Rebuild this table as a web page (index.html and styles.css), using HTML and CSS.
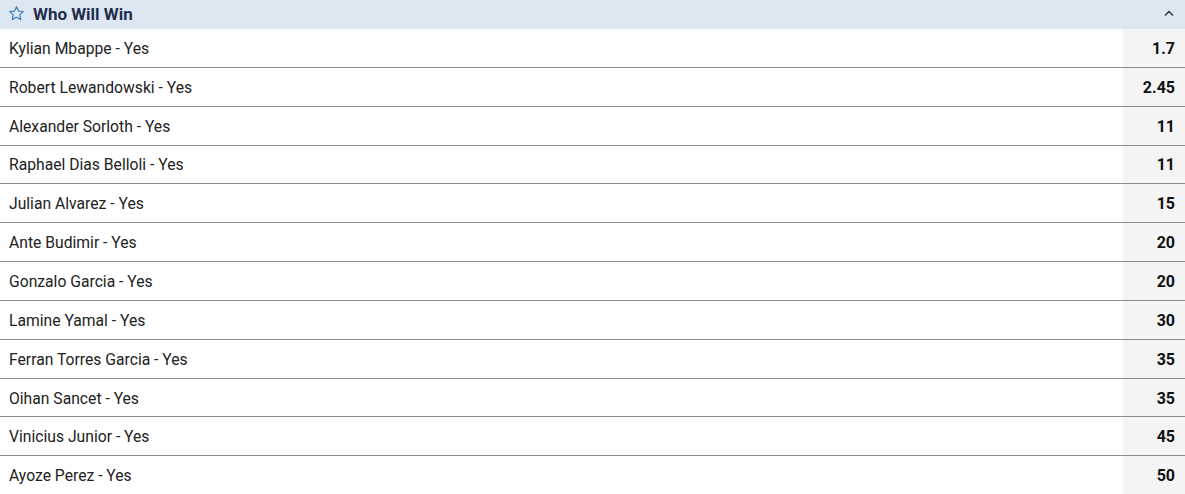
FILE: index.html
```html
<!DOCTYPE html>
<html>
<head>
<meta charset="utf-8">
<link rel="stylesheet" href="styles.css">
</head>
<body>
<div class="market">
  <div class="market-header">
    <svg class="star" width="17" height="17" viewBox="0 0 24 24"><path d="M12 2.5l2.9 6.1 6.6.8-4.9 4.6 1.3 6.6L12 17.3l-5.9 3.3 1.3-6.6-4.9-4.6 6.6-.8z" fill="none" stroke="#3a7fc1" stroke-width="1.7" stroke-linejoin="round"/></svg>
    <span class="title">Who Will Win</span>
    <svg class="chevron" width="10" height="7" viewBox="0 0 10 7"><path d="M1 5.5L5 1.5 9 5.5" fill="none" stroke="#2b3340" stroke-width="1.5"/></svg>
  </div>
  <div class="row"><span class="name">Kylian Mbappe - Yes</span><span class="odds">1.7</span></div>
  <div class="row"><span class="name">Robert Lewandowski - Yes</span><span class="odds">2.45</span></div>
  <div class="row"><span class="name">Alexander Sorloth - Yes</span><span class="odds">11</span></div>
  <div class="row"><span class="name">Raphael Dias Belloli - Yes</span><span class="odds">11</span></div>
  <div class="row"><span class="name">Julian Alvarez - Yes</span><span class="odds">15</span></div>
  <div class="row"><span class="name">Ante Budimir - Yes</span><span class="odds">20</span></div>
  <div class="row"><span class="name">Gonzalo Garcia - Yes</span><span class="odds">20</span></div>
  <div class="row"><span class="name">Lamine Yamal - Yes</span><span class="odds">30</span></div>
  <div class="row"><span class="name">Ferran Torres Garcia - Yes</span><span class="odds">35</span></div>
  <div class="row"><span class="name">Oihan Sancet - Yes</span><span class="odds">35</span></div>
  <div class="row"><span class="name">Vinicius Junior - Yes</span><span class="odds">45</span></div>
  <div class="row"><span class="name">Ayoze Perez - Yes</span><span class="odds">50</span></div>
</div>
</body>
</html>
```
FILE: styles.css
```css
html, body {
  margin: 0;
  padding: 0;
  background: #ffffff;
  font-family: Roboto, "Liberation Sans", Arial, sans-serif;
}
.market {
  width: 1185px;
}
.market-header {
  height: 29px;
  background: #dce7f1;
  display: flex;
  align-items: center;
  padding: 0 10px 2px 8px;
  box-sizing: border-box;
}
.star {
  margin-right: 8px;
  flex: none;
}
.title {
  font-size: 17px;
  font-weight: 700;
  color: #1f2d4f;
  flex: 1;
}
.chevron {
  margin-right: 1px;
}
.row {
  height: 38.85px;
  box-sizing: border-box;
  border-bottom: 1px solid #8c8c8c;
  display: flex;
  align-items: stretch;
}
.name {
  flex: 1;
  display: flex;
  align-items: center;
  padding-left: 9px;
  padding-top: 1px;
  font-size: 15.7px;
  color: #222222;
}
.odds {
  width: 62px;
  background: #f4f4f4;
  display: flex;
  align-items: center;
  justify-content: flex-end;
  padding-right: 10px;
  padding-top: 1px;
  box-sizing: border-box;
  font-size: 16px;
  font-weight: 700;
  color: #111111;
}
```
